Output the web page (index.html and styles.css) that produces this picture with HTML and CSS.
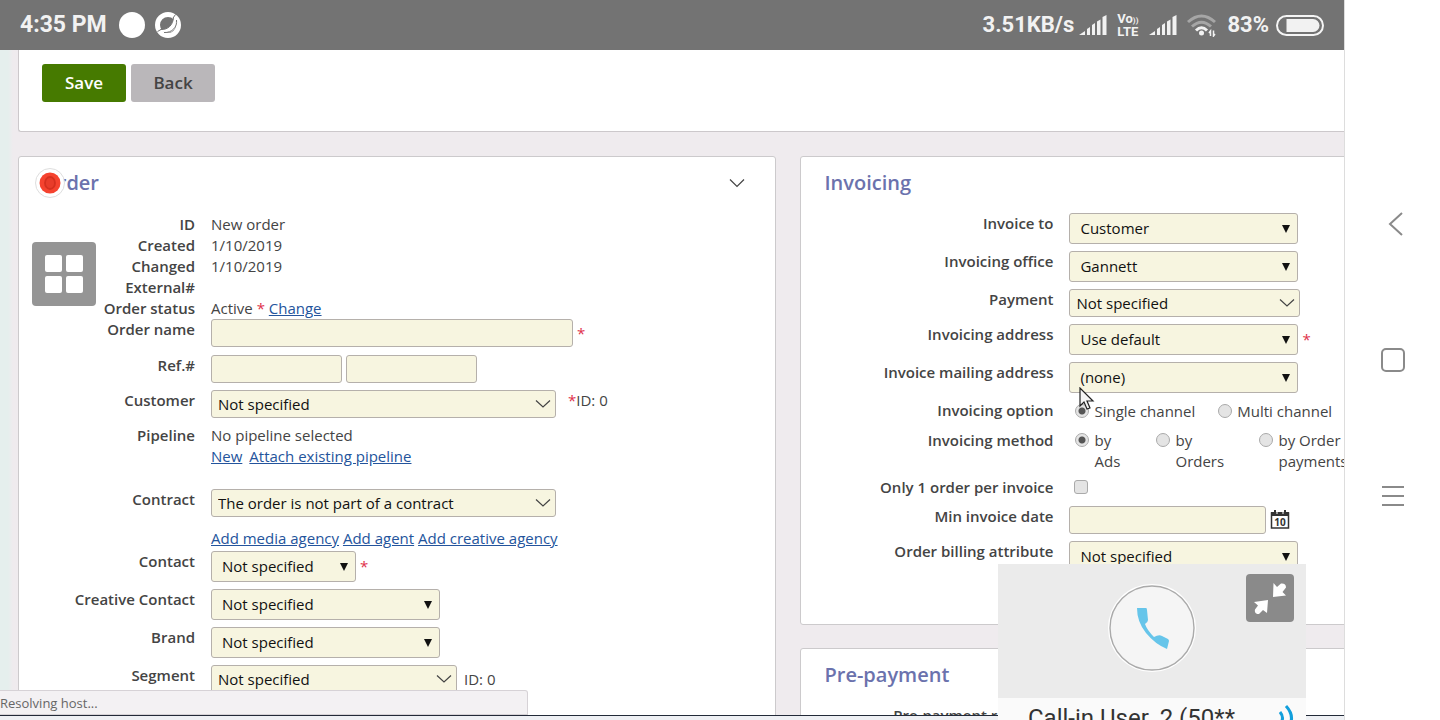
FILE: index.html
```
<!DOCTYPE html>
<html lang="en">
<head>
<meta charset="utf-8">
<title>New order</title>
<link rel="stylesheet" href="styles.css">
</head>
<body>
<div class="device">
  <div class="screen">
    <header class="status-bar">
      <div class="status-group">
        <span class="clock">4:35 PM</span>
        <svg class="dot-icon" width="26" height="26" viewBox="0 0 26 26"><circle cx="13" cy="13" r="13" fill="#fff"/></svg>
        <svg class="ring-icon" width="26" height="26" viewBox="0 0 26 26"><circle cx="13" cy="13" r="10.500" fill="none" stroke="#fff" stroke-width="5"/><path d="M18.500 5C23 10 22 20 13 20.500C9 20.500 6 19.500 5 17.500C13 18 18 13 18.500 5Z" fill="#fff"/><path d="M18.500 5.500C18 13 13 18 5.500 17.500M21.500 8C22.500 15 17 21 9 20.500M2.500 19.500L6 17.500M18 6L20.500 2.500" fill="none" stroke="#737373" stroke-width="1"/></svg>
      </div>
      <div class="status-group status-right">
        <span class="speed">3.51KB/s</span>
        <svg class="signal" width="28" height="20" viewBox="0 0 28 20" fill="#f2f2f2"><path d="M0 20L6 16V20ZM8 14L11 12V20H8ZM13 10L16 8V20H13ZM18 6.500L21.500 4.500V20H18ZM23.500 2L27.500 0V20H23.500Z"/></svg>
        <span class="volte"><span>Vo<small>))</small></span><span>LTE</span></span>
        <svg class="signal" width="28" height="20" viewBox="0 0 28 20" fill="#f2f2f2"><path d="M0 20L6 16V20ZM8 14L11 12V20H8ZM13 10L16 8V20H13ZM18 6.500L21.500 4.500V20H18ZM23.500 2L27.500 0V20H23.500Z"/></svg>
        <svg class="wifi" width="29" height="23" viewBox="0 0 29 23" fill="none" stroke-width="3"><path d="M1 8Q14.500-4 28 8" stroke="#a6a6a6"/><path d="M5 12.500Q14.500 4 24 12.500" stroke="#a6a6a6"/><path d="M9 16.500Q14.500 11 20 16.500" stroke="#f2f2f2"/><circle cx="14.500" cy="19" r="2.500" fill="#f2f2f2"/><path d="M23.500 22V17L22 19M26.500 16.500V22L28 20" stroke="#f2f2f2" stroke-width="1.500"/></svg>
        <span class="battery-level">83%</span>
        <svg class="battery" width="48" height="21" viewBox="0 0 48 21"><rect x="1" y="1" width="46" height="19" rx="9.500" fill="none" stroke="#f5f5f5" stroke-width="2"/><path d="M10.500 4H37A6.500 6.500 0 0 1 37 17H10.500Z" fill="#f2f2f2"/></svg>
      </div>
    </header>

    <main class="page">
      <section class="toolbar">
        <button class="btn btn-save" type="button">Save</button>
        <button class="btn btn-back" type="button">Back</button>
      </section>

      <form class="columns">
        <section class="card">
          <div class="card-head">
            <h2>Order</h2>
            <svg width="16" height="10" viewBox="0 0 16 10" fill="none" stroke="#444" stroke-width="1.200"><path d="M1 1.500L8 8.500L15 1.500"/></svg>
          </div>
          <div class="fields fields-order">
            <div class="row line"><span class="label">ID</span><span>New order</span></div>
            <div class="row line"><span class="label">Created</span><span>1/10/2019</span></div>
            <div class="row line"><span class="label">Changed</span><span>1/10/2019</span></div>
            <div class="row line"><span class="label">External#</span><span></span></div>
            <div class="row line"><span class="label">Order status</span><span>Active <b class="req">*</b> <a href="#">Change</a></span></div>
            <div class="row name-row"><label class="label" for="name">Order name</label><div class="control"><input class="text wide" id="name" type="text"><b class="req">*</b></div></div>
            <div class="row"><label class="label" for="ref">Ref.#</label><div class="control"><input class="text half" id="ref" type="text"><input class="text half" type="text" aria-label="Second reference"></div></div>
            <div class="row"><label class="label" for="customer">Customer</label><div class="control top"><select class="chevron w344" id="customer"><option>Not specified</option></select><span class="note"><b class="req">*</b>ID: 0</span></div></div>
            <div class="row pipeline"><span class="label">Pipeline</span><div>No pipeline selected<br><a href="#">New</a><a class="attach" href="#">Attach existing pipeline</a></div></div>
            <div class="row contract"><label class="label" for="contract">Contract</label><div class="control"><select class="chevron w344" id="contract"><option>The order is not part of a contract</option></select></div></div>
            <div class="row links"><span></span><div><a href="#">Add media agency</a> <a href="#">Add agent</a> <a href="#">Add creative agency</a></div></div>
            <div class="row"><label class="label" for="contact">Contact</label><div class="control"><select class="arrow w146" id="contact"><option>Not specified</option></select><b class="req">*</b></div></div>
            <div class="row"><label class="label" for="creative">Creative Contact</label><div class="control"><select class="arrow w229" id="creative"><option>Not specified</option></select></div></div>
            <div class="row"><label class="label" for="brand">Brand</label><div class="control"><select class="arrow w229" id="brand"><option>Not specified</option></select></div></div>
            <div class="row"><label class="label" for="segment">Segment</label><div class="control"><select class="chevron w246" id="segment"><option>Not specified</option></select><span class="id-note">ID: 0</span></div></div>
          </div>
        </section>

        <div class="side">
          <section class="card invoicing">
            <div class="card-head"><h2>Invoicing</h2></div>
            <div class="fields fields-invoice">
              <div class="row"><label class="label" for="to">Invoice to</label><div class="control"><select class="arrow w229" id="to"><option>Customer</option></select></div></div>
              <div class="row"><label class="label" for="office">Invoicing office</label><div class="control"><select class="arrow w229" id="office"><option>Gannett</option></select></div></div>
              <div class="row"><label class="label" for="payment">Payment</label><div class="control"><select class="chevron w231" id="payment"><option>Not specified</option></select></div></div>
              <div class="row"><label class="label" for="address">Invoicing address</label><div class="control"><select class="arrow w229" id="address"><option>Use default</option></select><b class="req">*</b></div></div>
              <div class="row"><label class="label" for="mailing">Invoice mailing address</label><div class="control"><select class="arrow w229" id="mailing"><option>(none)</option></select></div></div>
              <div class="row choice-row"><span class="label">Invoicing option</span><div class="choices options"><label class="choice"><input type="radio" name="option" checked><span>Single channel</span></label><label class="choice"><input type="radio" name="option"><span>Multi channel</span></label></div></div>
              <div class="row method-row"><span class="label">Invoicing method</span><div class="choices methods"><label class="choice"><input type="radio" name="method" checked><span>by<br>Ads</span></label><label class="choice"><input type="radio" name="method"><span>by<br>Orders</span></label><label class="choice"><input type="radio" name="method"><span>by Order<br>payments</span></label></div></div>
              <div class="row check-row"><label class="label" for="only">Only 1 order per invoice</label><div class="choices"><input type="checkbox" id="only"></div></div>
              <div class="row"><label class="label" for="date">Min invoice date</label><div class="control"><input class="text w197" id="date" type="text"><svg class="calendar" width="20" height="20" viewBox="0 0 20 20"><path d="M1.500 3H18.500V18H1.500Z" fill="#fff" stroke="#333" stroke-width="1.500"/><path d="M1 2H19V6H1Z" fill="#333"/><path d="M5 0V4M15 0V4" stroke="#333" stroke-width="2"/><path d="M7 1V4M13 1V4" stroke="#fff" stroke-width="1"/><text x="10" y="16" text-anchor="middle" class="calendar-day">10</text></svg></div></div>
              <div class="row"><label class="label" for="billing">Order billing attribute</label><div class="control"><select class="arrow w229" id="billing"><option>Not specified</option></select></div></div>
            </div>
          </section>
          <section class="card">
            <div class="card-head"><h2>Pre-payment</h2></div>
            <div class="fields fields-invoice"><div class="row"><span class="label">Pre-payment required</span><span></span></div></div>
          </section>
        </div>
      </form>
    </main>

    <div class="browser-status">Resolving host...</div>
    <div class="taskbar"></div>

    <svg class="record" width="34" height="34" viewBox="0 0 34 34"><circle cx="17" cy="17" r="14.500" fill="#fff" stroke="#dedede"/><circle cx="17" cy="17" r="10.500" fill="#f5432f"/><ellipse cx="17" cy="17" rx="5" ry="6" fill="#e83c2a" stroke="#d5301f" stroke-width="1.800"/></svg>
    <button class="apps" type="button" aria-label="Apps"><i></i><i></i><i></i><i></i></button>
    <svg class="cursor" width="16" height="24" viewBox="0 0 16 24"><path d="M1 1V19L5 15L8 22L11 21L8 14H14Z" fill="#f4f4f4" stroke="#222" stroke-width="1.200"/></svg>

    <aside class="call">
      <div class="call-video">
        <svg class="phone" width="88" height="88" viewBox="0 0 88 88"><circle cx="44" cy="44" r="44" fill="#fff"/><circle cx="44" cy="44" r="42" fill="#f5f5f5" stroke="#aaa" stroke-width="1.400"/><path d="M29 24H38Q39 24 39 26L40 36Q40 38 37 40Q39 46 46 53Q51 50 54 52L60 55Q61 56 61 57L59 65Q47 60 38 49Q29 38 29 24Z" fill="#66c5ea"/></svg>
        <button class="shrink" type="button" aria-label="Shrink"><svg width="34" height="36" viewBox="0 0 34 36" fill="#fff"><path d="M20.500 3L20 17L33 15.500L29.500 12L33 7.500Q33 3 28 3.500L24 7ZM15 20L1 22L5 25.500L2 29.500Q1 34 6 34L10 30L14 33Z"/></svg></button>
      </div>
      <div class="call-name"><span>Call-in User_2 (50**</span><svg width="18" height="28" viewBox="0 0 18 28" fill="none" stroke="#129fdc" stroke-width="3"><path d="M2 8Q7 14 2 20M8 2Q19 14 8 26"/></svg></div>
    </aside>
  </div>

  <nav class="nav-bar">
    <button type="button" aria-label="Back"><svg width="28" height="28" viewBox="0 0 28 28" fill="none" stroke="#8a8a8a" stroke-width="2"><path d="M23 3L11 14L23 25"/></svg></button>
    <button type="button" aria-label="Home"><svg width="28" height="28" viewBox="0 0 28 28" fill="none" stroke="#8a8a8a" stroke-width="2"><rect x="3" y="3" width="22" height="22" rx="4"/></svg></button>
    <button type="button" aria-label="Menu"><svg width="28" height="28" viewBox="0 0 28 28" fill="none" stroke="#8a8a8a" stroke-width="2"><path d="M3 5H25M3 14H25M3 23H25"/></svg></button>
  </nav>
</div>
</body>
</html>
```

FILE: styles.css
```
* { box-sizing: border-box; }
body { margin: 0; background: #fff; color: #444; font: 15px/21px "Open Sans", sans-serif; }
button { border: 0; padding: 0; font: inherit; }
svg { display: block; flex: none; }
a { color: #24549c; text-decoration: underline; }

.device { display: flex; height: 100vh; overflow: hidden; }
.screen { position: relative; flex: 1; min-width: 0; display: flex; flex-direction: column; overflow: hidden; background: #efebee; }

.status-bar { flex: none; height: 50px; padding: 0 20px; display: flex; align-items: center; justify-content: space-between; background: #737373; color: #f2f2f2; font: 700 23px/28px Roboto, sans-serif; }
.status-group { display: flex; align-items: center; }
.dot-icon { margin-left: 12px; }
.ring-icon { margin-left: 10px; }
.signal { margin-left: 5px; }
.speed { font-size: 22px; }
.volte { display: flex; flex-direction: column; margin: 0 6px 0 10px; font: 700 13px/11px Roboto, sans-serif; }
.volte small { font-size: 8px; }
.wifi { margin-left: 10px; }
.battery-level { margin: 0 7px 0 11px; font-size: 22px; }

.page { flex: 1; min-height: 0; overflow: hidden; padding-left: 18px; background: linear-gradient(90deg, #e5efed 0, #e5efed 8px, #efebee 13px); }
.toolbar { height: 82px; padding: 14px 23px; display: flex; gap: 5px; background: #fff; border: 1px solid #ccc8cb; border-width: 0 0 1px 1px; border-radius: 0 0 0 3px; }
.btn { width: 84px; height: 38px; padding-bottom: 2px; border-radius: 3px; font-size: 17px; font-weight: 600; }
.btn-save { background: #467a00; color: #fff; }
.btn-back { background: #bab7ba; color: #444; }

.columns { display: grid; grid-template-columns: 57.2% 57.2%; gap: 24px; margin-top: 24px; }
.card { background: #fff; border: 1px solid #cccacc; border-radius: 3px; padding: 12px 23px; }
.side { display: flex; flex-direction: column; gap: 23px; }
.invoicing { min-height: 469px; }
.card-head { display: flex; align-items: center; justify-content: space-between; height: 28px; padding-right: 7px; }
h2 { margin: 0; font-size: 20px; line-height: 28px; font-weight: 600; color: #6b72ad; }

.fields { padding-top: 17px; }
.fields-invoice { padding-top: 16px; }
.row { display: grid; column-gap: 16px; margin-bottom: 7px; align-items: start; }
.fields-order .row { grid-template-columns: 153px 1fr; }
.fields-invoice .row { grid-template-columns: 229px 1fr; }
.label { text-align: right; font-weight: 600; color: #444; white-space: nowrap; }
.row.line { margin-bottom: 0; min-height: 21px; }
.control { display: flex; align-items: center; gap: 4px; }
.control.top { align-items: flex-start; }
.req { color: #e0304a; font-weight: 400; }
.note { margin-left: 8px; }
.id-note { margin-left: 3px; }
.attach { margin-left: 7px; }
.name-row { margin-bottom: 8px; }
.pipeline { margin-bottom: 22px; }
.contract { margin-bottom: 11px; }
.row.links { margin-bottom: 2px; white-space: nowrap; }

.text, select { height: 28px; border: 1px solid #b5b0ab; border-radius: 3px; background-color: #f7f5e0; color: #111; font: 15px/21px "Open Sans", sans-serif; }
.text { padding: 0 6px; }
select { appearance: none; padding: 0 6px; background-repeat: no-repeat; }
.chevron { background-image: url("data:image/svg+xml,%3Csvg xmlns='http://www.w3.org/2000/svg' width='16' height='10' fill='none' stroke='%23444' stroke-width='1.2'%3E%3Cpath d='M1 1.500L8 8L15 1.500'/%3E%3C/svg%3E"); background-position: right 4px center; }
.arrow { height: 31px; padding: 0 10px; background-image: url("data:image/svg+xml,%3Csvg xmlns='http://www.w3.org/2000/svg' width='8' height='8'%3E%3Cpath d='M0 0H8L4 8Z' fill='%23111'/%3E%3C/svg%3E"); background-position: right 7px center; }
.wide { width: 362px; }
.half { width: 131px; }
.w344 { width: 345px; }
.w146 { width: 145px; }
.w229 { width: 229px; }
.w231 { width: 231px; }
.w246 { width: 246px; }
.w197 { width: 197px; }

.choices { display: flex; }
.choice { display: flex; align-items: flex-start; gap: 5px; white-space: nowrap; }
.choice-row { min-height: 23px; }
.options { gap: 17px; padding-top: 1px; }
.method-row { margin-bottom: 5px; }
.methods { display: grid; grid-template-columns: 81px 103px 1fr; }
.check-row { min-height: 22px; }
.choices input { appearance: none; flex: none; width: 14px; height: 14px; margin: 3px 0 0 6px; border: 1px solid #aaa; border-radius: 50%; background: #e4e4e4; }
.choices input:checked { background: radial-gradient(circle, #555 0, #555 3px, #e4e4e4 4px); }
.choices input[type="checkbox"] { border-radius: 3px; margin-left: 5px; }
.calendar-day { font: 700 10px "Open Sans", sans-serif; fill: #333; }

.browser-status { position: absolute; left: 0; bottom: 5px; width: 528px; height: 25px; background: #f3f1f3; border: 1px solid #d6d2d6; border-left: 0; border-radius: 0 3px 0 0; color: #666; font-size: 13px; line-height: 25px; }
.taskbar { position: absolute; left: 0; right: 0; bottom: 0; height: 5px; border-top: 1px solid #222a38; background: #eef0f4; }
.record { position: absolute; left: 33px; top: 166px; }
.apps { position: absolute; left: 32px; top: 242px; width: 64px; height: 64px; padding: 13px; display: grid; grid-template-columns: 1fr 1fr; gap: 4px; border-radius: 4px; background: #959595; }
.apps i { border-radius: 2px; background: #fff; height: 17px; }
.cursor { position: absolute; left: 1079px; top: 387px; }

.call { position: absolute; right: 38px; bottom: 0; width: 308px; height: 156px; overflow: hidden; background: #fafafa; }
.call-video { position: relative; height: 134px; padding-bottom: 6px; display: flex; justify-content: center; align-items: center; background: #ebebeb; }
.shrink { position: absolute; top: 10px; right: 12px; width: 48px; height: 48px; display: grid; place-items: center; border-radius: 4px; background: #8a8a8a; }
.call-name { display: flex; align-items: flex-start; justify-content: space-between; padding: 6px 10px 0 30px; color: #333; font: 24px/28px Roboto, sans-serif; }

.nav-bar { flex: none; width: 96px; border-left: 1px solid #ddd; display: flex; flex-direction: column; align-items: center; justify-content: center; gap: 108px; background: #fff; }
.nav-bar button { background: none; }
```
